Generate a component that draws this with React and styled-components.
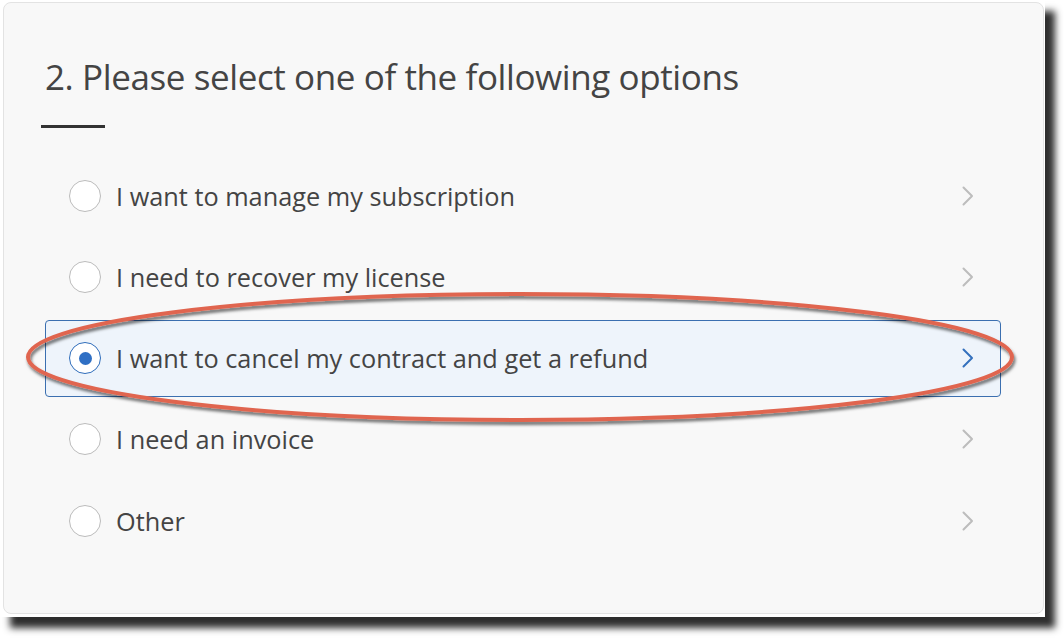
import React, { useState } from 'react';
import styled, { createGlobalStyle } from 'styled-components';

const GlobalStyle = createGlobalStyle`
  html, body {
    margin: 0;
    padding: 0;
    background: #ffffff;
  }
  body {
    font-family: "Open Sans", "Liberation Sans", sans-serif;
  }
`;

const options = [
  'I want to manage my subscription',
  'I need to recover my license',
  'I want to cancel my contract and get a refund',
  'I need an invoice',
  'Other',
];

const Page = styled.div`
  position: relative;
  width: 1064px;
  height: 638px;
  overflow: hidden;
`;

const Frame = styled.div`
  box-sizing: border-box;
  width: 1045px;
  height: 617px;
  padding: 2px 1px 3px 3px;
  background: #ffffff;
  box-shadow: 10px 11px 7px rgba(0, 0, 0, 0.82);
`;

const Card = styled.section`
  box-sizing: border-box;
  height: 100%;
  padding: 50px 42px 0 37px;
  background: #f8f8f8;
  border: 1px solid #e3e3e3;
  border-radius: 8px;
`;

const Title = styled.h2`
  margin: 0 0 0 4px;
  font-size: 35px;
  line-height: 48px;
  font-weight: 400;
  letter-spacing: -0.4px;
  color: #444444;
`;

const Bar = styled.div`
  width: 64px;
  height: 3px;
  margin-top: 24px;
  background: #333333;
`;

const List = styled.ul`
  list-style: none;
  margin: 29px 0 0 4px;
  padding: 0;
  display: flex;
  flex-direction: column;
  gap: 4.25px;
`;

const Row = styled.li`
  box-sizing: border-box;
  height: 77px;
  display: flex;
  align-items: center;
  padding: 0 26px 0 23px;
  border: 1px solid ${(p) => (p.$active ? '#3b6fb0' : 'transparent')};
  border-radius: 4px;
  background: ${(p) => (p.$active ? '#eef4fb' : 'transparent')};
  cursor: pointer;
`;

const Radio = styled.span`
  box-sizing: border-box;
  flex: none;
  width: 32px;
  height: 32px;
  border-radius: 50%;
  background: #ffffff;
  border: ${(p) => (p.$active ? '1.5px solid #2f6dbb' : '1px solid #bcbcbc')};
  display: flex;
  align-items: center;
  justify-content: center;

  &::after {
    content: '';
    display: ${(p) => (p.$active ? 'block' : 'none')};
    width: 13px;
    height: 13px;
    border-radius: 50%;
    background: #2f6fc4;
  }
`;

const Label = styled.span`
  flex: 1;
  margin-left: 15px;
  font-size: 25.3px;
  line-height: 34px;
  color: #444444;
`;

const Chevron = styled.svg`
  flex: none;
  width: 12px;
  height: 20px;
  color: ${(p) => (p.$active ? '#3470bd' : '#bdbdbd')};
`;

const Annotation = styled.svg`
  position: absolute;
  left: 0;
  top: 0;
  width: 1064px;
  height: 638px;
  pointer-events: none;
`;

const App = () => {
  const [selected, setSelected] = useState(2);

  return (
    <Page>
      <GlobalStyle />
      <Frame>
        <Card>
          <Title>2. Please select one of the following options</Title>
          <Bar />
          <List>
            {options.map((text, i) => (
              <Row key={text} $active={i === selected} onClick={() => setSelected(i)}>
                <Radio $active={i === selected} />
                <Label>{text}</Label>
                <Chevron $active={i === selected} viewBox="0 0 12 20">
                  <polyline
                    points="1.5,1.5 10,10 1.5,18.5"
                    fill="none"
                    stroke="currentColor"
                    strokeWidth="2"
                    strokeLinecap="round"
                    strokeLinejoin="round"
                  />
                </Chevron>
              </Row>
            ))}
          </List>
        </Card>
      </Frame>
      {/* hand-drawn highlight over the chosen option */}
      <Annotation viewBox="0 0 1064 638">
        <defs>
          <filter id="ringShadow" x="-5%" y="-20%" width="110%" height="140%">
            <feDropShadow dx="1.5" dy="3" stdDeviation="1.6" floodColor="#000" floodOpacity="0.55" />
          </filter>
        </defs>
        <ellipse
          cx="520"
          cy="357"
          rx="492"
          ry="63"
          fill="none"
          stroke="#e0654f"
          strokeWidth="4"
          filter="url(#ringShadow)"
        />
      </Annotation>
    </Page>
  );
};

export default App;
